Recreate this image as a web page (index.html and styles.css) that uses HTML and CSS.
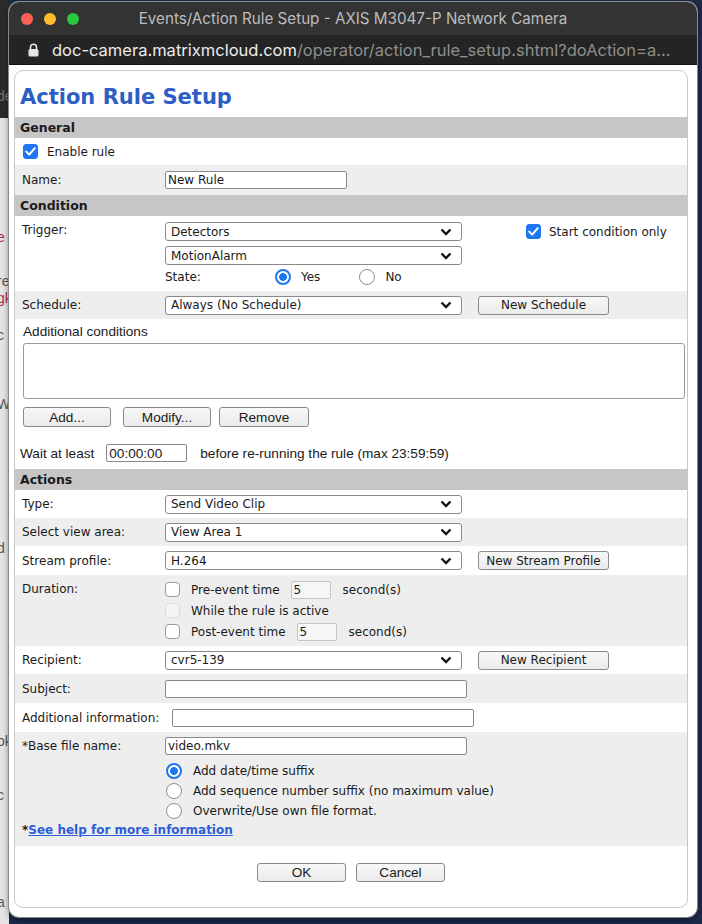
FILE: index.html
```html
<!DOCTYPE html>
<html lang="en">

<head>
    <meta charset="UTF-8">
    <title>Events/Action Rule Setup - AXIS M3047-P Network Camera</title>
    <link rel="stylesheet" href="styles.css">
</head>

<body>
    <div class="desk">
        <!-- bits of the page behind the popup -->
        <div class="behind">
            <span class="b-dark">de</span>
            <span class="b-red b1">e</span>
            <span class="b2">re</span>
            <span class="b-red">gk</span>
            <span class="b3">c</span>
            <span>i</span>
            <span class="b4">W</span>
            <span class="b5">d</span>
            <span class="b6">ok</span>
            <span class="b7">c</span>
            <span class="b8">a</span>
        </div>

        <div class="window">
            <div class="titlebar">
                <div class="lights">
                    <span class="light red"></span>
                    <span class="light yellow"></span>
                    <span class="light green"></span>
                </div>
                <div class="win-title">Events/Action Rule Setup - AXIS M3047-P Network Camera</div>
            </div>
            <div class="addressbar">
                <svg class="lock" width="11" height="14" viewBox="0 0 11 14">
                    <path d="M2.5 6V4.2a3 3 0 0 1 6 0V6" fill="none" stroke="#e6e6e6" stroke-width="1.6"/>
                    <rect x="0.5" y="6" width="10" height="7.5" rx="1.5" fill="#e6e6e6"/>
                </svg>
                <span class="url"><span class="host">doc-camera.matrixmcloud.com</span>/operator/action_rule_setup.shtml?doAction=a...</span>
            </div>

            <div class="page">
                <div class="panel">
                    <h1>Action Rule Setup</h1>

                    <!-- General -->
                    <div class="bar">General</div>
                    <div class="row enable-row">
                        <span class="check on"><svg width="11" height="9" viewBox="0 0 11 9"><path d="M1.2 4.6l3 3 5.6-6.4" fill="none" stroke="#fff" stroke-width="2" stroke-linecap="round" stroke-linejoin="round"/></svg></span>
                        <span class="lbl">Enable rule</span>
                    </div>
                    <div class="row grey name-row">
                        <span class="label">Name:</span>
                        <span class="field w182">New Rule</span>
                    </div>

                    <!-- Condition -->
                    <div class="bar">Condition</div>
                    <div class="row trigger-row">
                        <span class="label">Trigger:</span>
                        <div class="trigger-sel">
                            <div class="select">Detectors<svg class="chev" width="12" height="8" viewBox="0 0 12 8"><path d="M1.5 1.5l4.5 4.5 4.5-4.5" fill="none" stroke="#111" stroke-width="2.4"/></svg></div>
                            <div class="select">MotionAlarm<svg class="chev" width="12" height="8" viewBox="0 0 12 8"><path d="M1.5 1.5l4.5 4.5 4.5-4.5" fill="none" stroke="#111" stroke-width="2.4"/></svg></div>
                            <div class="state">
                                <span class="state-lbl">State:</span>
                                <span class="radio on"></span><span class="opt">Yes</span>
                                <span class="radio"></span><span class="opt">No</span>
                            </div>
                        </div>
                        <div class="start-only">
                            <span class="check on"><svg width="11" height="9" viewBox="0 0 11 9"><path d="M1.2 4.6l3 3 5.6-6.4" fill="none" stroke="#fff" stroke-width="2" stroke-linecap="round" stroke-linejoin="round"/></svg></span>
                            <span>Start condition only</span>
                        </div>
                    </div>
                    <div class="row grey sel-row">
                        <span class="label">Schedule:</span>
                        <div class="select">Always (No Schedule)<svg class="chev" width="12" height="8" viewBox="0 0 12 8"><path d="M1.5 1.5l4.5 4.5 4.5-4.5" fill="none" stroke="#111" stroke-width="2.4"/></svg></div>
                        <button class="btn side">New Schedule</button>
                    </div>
                    <div class="extra">
                        <div class="extra-lbl">Additional conditions</div>
                        <div class="listbox"></div>
                        <div class="extra-btns">
                            <button class="btn w88">Add...</button>
                            <button class="btn w88 gap12">Modify...</button>
                            <button class="btn w90">Remove</button>
                        </div>
                        <div class="wait">
                            <span>Wait at least</span>
                            <span class="field time">00:00:00</span>
                            <span>before re-running the rule (max 23:59:59)</span>
                        </div>
                    </div>

                    <!-- Actions -->
                    <div class="bar">Actions</div>
                    <div class="row sel-row">
                        <span class="label">Type:</span>
                        <div class="select">Send Video Clip<svg class="chev" width="12" height="8" viewBox="0 0 12 8"><path d="M1.5 1.5l4.5 4.5 4.5-4.5" fill="none" stroke="#111" stroke-width="2.4"/></svg></div>
                    </div>
                    <div class="row grey sel-row">
                        <span class="label">Select view area:</span>
                        <div class="select">View Area 1<svg class="chev" width="12" height="8" viewBox="0 0 12 8"><path d="M1.5 1.5l4.5 4.5 4.5-4.5" fill="none" stroke="#111" stroke-width="2.4"/></svg></div>
                    </div>
                    <div class="row sel-row stream-row">
                        <span class="label">Stream profile:</span>
                        <div class="select">H.264<svg class="chev" width="12" height="8" viewBox="0 0 12 8"><path d="M1.5 1.5l4.5 4.5 4.5-4.5" fill="none" stroke="#111" stroke-width="2.4"/></svg></div>
                        <button class="btn side">New Stream Profile</button>
                    </div>
                    <div class="row grey duration-row">
                        <span class="label">Duration:</span>
                        <div class="dur">
                            <div class="dur-line">
                                <span class="check"></span>
                                <span class="dur-txt">Pre-event time</span>
                                <span class="field sec">5</span>
                                <span>second(s)</span>
                            </div>
                            <div class="dur-line">
                                <span class="check off"></span>
                                <span class="dur-txt">While the rule is active</span>
                            </div>
                            <div class="dur-line">
                                <span class="check"></span>
                                <span class="dur-txt">Post-event time</span>
                                <span class="field sec">5</span>
                                <span>second(s)</span>
                            </div>
                        </div>
                    </div>
                    <div class="row sel-row">
                        <span class="label">Recipient:</span>
                        <div class="select">cvr5-139<svg class="chev" width="12" height="8" viewBox="0 0 12 8"><path d="M1.5 1.5l4.5 4.5 4.5-4.5" fill="none" stroke="#111" stroke-width="2.4"/></svg></div>
                        <button class="btn side">New Recipient</button>
                    </div>
                    <div class="row grey text-row">
                        <span class="label">Subject:</span>
                        <span class="field w302"></span>
                    </div>
                    <div class="row text-row">
                        <span class="label wide">Additional information:</span>
                        <span class="field w302"></span>
                    </div>
                    <div class="row grey base-row">
                        <div class="base-top">
                            <span class="label">*Base file name:</span>
                            <span class="field w302">video.mkv</span>
                        </div>
                        <div class="suffix">
                            <div class="suffix-line"><span class="radio on"></span><span>Add date/time suffix</span></div>
                            <div class="suffix-line"><span class="radio"></span><span>Add sequence number suffix (no maximum value)</span></div>
                            <div class="suffix-line"><span class="radio"></span><span>Overwrite/Use own file format.</span></div>
                        </div>
                        <div class="help">*<a href="#">See help for more information</a></div>
                    </div>

                    <div class="footer">
                        <button class="btn w89">OK</button>
                        <button class="btn w89">Cancel</button>
                    </div>
                </div>
            </div>
        </div>
    </div>
</body>

</html>
```

FILE: styles.css
```css
/* Desktop behind the popup window */
body {
    margin: 0;
    background: #1c2b4a;
    font-family: 'DejaVu Sans', Verdana, sans-serif;
    color: #1a1a1a;
}

.desk {
    width: 702px;
    height: 924px;
    display: flex;
    overflow: hidden;
    background: linear-gradient(90deg, #e4e4e4 0, #e4e4e4 9px, #1c2b4a 9px);
}

.behind {
    width: 9px;
    flex-shrink: 0;
    display: flex;
    flex-direction: column;
    font-family: 'Liberation Sans', Arial, sans-serif;
    font-size: 14px;
    color: #555;
    line-height: 17px;
    text-indent: -3px;
    overflow: hidden;
    background: linear-gradient(180deg, #2a2a2a 0, #2a2a2a 118px, transparent 118px);
}

.behind .b-dark { margin-top: 88px; color: #777; }
.behind .b-red { color: #b3264a; }
.behind .b1 { margin-top: 124px; }
.behind .b2 { margin-top: 27px; }
.behind .b3 { margin-top: 20px; }
.behind .b4 { margin-top: 35px; }
.behind .b5 { margin-top: 127px; }
.behind .b6 { margin-top: 176px; }
.behind .b7 { margin-top: 37px; }
.behind .b8 { margin-top: 90px; }

/* Popup window */
.window {
    width: 688px;
    height: 915px;
    margin-top: 2px;
    flex-shrink: 0;
    background: #fff;
    border-radius: 10px;
    overflow: hidden;
    box-shadow: 0 0 0 1px #8a8a8a, 0 3px 6px rgba(0, 0, 0, 0.5);
    display: flex;
    flex-direction: column;
}

.titlebar {
    height: 33px;
    background: #333333;
    display: flex;
    align-items: center;
}

.lights {
    display: flex;
    gap: 11px;
    padding-left: 12px;
}

.light {
    width: 12px;
    height: 12px;
    border-radius: 50%;
}

.red { background: #fe5f57; }
.yellow { background: #febc2e; }
.green { background: #28c840; }

.win-title {
    flex: 1;
    text-align: center;
    font-family: 'Inter', 'Roboto', sans-serif;
    font-size: 15.2px;
    color: #bdbdbd;
    padding-right: 70px;
}

.addressbar {
    height: 29px;
    background: #242424;
    display: flex;
    align-items: center;
    gap: 13px;
    padding-left: 19px;
    border-bottom: 1px solid #111;
}

.url {
    font-family: 'Inter', 'Roboto', sans-serif;
    font-size: 16.5px;
    color: #8e8e8e;
    white-space: nowrap;
}

.host {
    color: #ececec;
}

/* Page inside the popup */
.page {
    flex: 1;
    padding: 5px 9px 9px 5px;
    display: flex;
}

.panel {
    flex: 1;
    border: 1px solid #c8c8c8;
    border-radius: 9px;
    display: flex;
    flex-direction: column;
    font-size: 12px;
}

h1 {
    margin: 0;
    height: 46px;
    padding: 14px 0 0 5px;
    box-sizing: border-box;
    font-size: 21px;
    color: #2d5ec4;
    font-weight: bold;
}

.bar {
    background: #c6c6c6;
    font-weight: bold;
    font-size: 12.5px;
    padding: 3px 5px 0;
    height: 21px;
    box-sizing: border-box;
}

.row {
    display: flex;
    align-items: center;
    padding: 0 7px;
    box-sizing: border-box;
}

.grey {
    background: #eeeeee;
}

.label {
    width: 143px;
    flex-shrink: 0;
}

.label.wide {
    width: 150px;
}

.enable-row {
    height: 27px;
    padding-left: 8px;
    gap: 9px;
}

.name-row {
    height: 30px;
}

/* Form controls */
.field {
    height: 18px;
    box-sizing: border-box;
    border: 1px solid #8a8a8a;
    border-radius: 2px;
    background: #fff;
    padding: 1px 2px 0;
    font-size: 12px;
    line-height: 15px;
}

.w182 { width: 182px; }
.w302 { width: 302px; }

.select {
    width: 297px;
    height: 19px;
    box-sizing: border-box;
    border: 1px solid #8a8a8a;
    border-radius: 3px;
    background: #fff;
    padding: 0 9px 0 5px;
    display: flex;
    align-items: center;
    justify-content: space-between;
    font-size: 12px;
}

.check {
    width: 15px;
    height: 15px;
    box-sizing: border-box;
    border: 1px solid #9a9a9a;
    border-radius: 4px;
    background: #fff;
    display: inline-flex;
    align-items: center;
    justify-content: center;
    flex-shrink: 0;
}

.check.on {
    background: #1d76f2;
    border-color: #1d76f2;
    border-radius: 3px;
}

.check.off {
    border-color: #dcdcdc;
    background: #f4f4f4;
}

.radio {
    width: 16px;
    height: 16px;
    box-sizing: border-box;
    border: 1px solid #8e8e8e;
    border-radius: 50%;
    background: #fff;
    flex-shrink: 0;
}

.radio.on {
    border: 2px solid #1d76f2;
    background: radial-gradient(circle, #1d76f2 0, #1d76f2 3.6px, #fff 4.2px);
}

.btn {
    height: 19px;
    box-sizing: border-box;
    border: 1px solid #8a8a8a;
    border-radius: 3px;
    background: linear-gradient(#f7f7f7, #ebebeb);
    font-family: 'DejaVu Sans', Verdana, sans-serif;
    font-size: 12px;
    color: #1a1a1a;
    padding: 0;
}

.btn.side {
    width: 131px;
    margin-left: 16px;
}

/* Condition */
.trigger-row {
    align-items: flex-start;
    height: 75px;
    padding-top: 6px;
}

.trigger-row .label {
    padding-top: 1px;
}

.trigger-sel {
    display: flex;
    flex-direction: column;
    gap: 5px;
}

.state {
    display: flex;
    align-items: center;
    height: 20px;
    margin-top: -3px;
}

.state-lbl {
    width: 110px;
}

.state .opt {
    margin-left: 10px;
    margin-right: 39px;
}

.start-only {
    display: flex;
    align-items: center;
    gap: 8px;
    margin-left: 64px;
    margin-top: 2px;
}

.sel-row {
    height: 28px;
}

.stream-row {
    height: 29px;
}

.extra {
    padding: 5px 0 0 8px;
    height: 150px;
    box-sizing: border-box;
    font-family: 'Liberation Sans', Arial, sans-serif;
    font-size: 13.6px;
}

.extra-lbl {
    height: 19px;
}

.listbox {
    width: 662px;
    height: 56px;
    box-sizing: border-box;
    border: 1px solid #9a9a9a;
    border-radius: 3px;
}

.extra-btns {
    display: flex;
    gap: 8px;
    margin-top: 8px;
}

.extra .btn {
    height: 20px;
    font-family: 'Liberation Sans', Arial, sans-serif;
    font-size: 13.6px;
}

.w88 { width: 88px; }
.w90 { width: 90px; }
.w89 { width: 89px; }

.extra-btns .gap12 {
    margin-left: 4px;
}

.wait {
    display: flex;
    align-items: center;
    margin-top: 17px;
    margin-left: -3px;
}

.wait .time {
    width: 81px;
    font-family: 'Liberation Sans', Arial, sans-serif;
    font-size: 13.6px;
    margin: 0 13px 0 12px;
}

/* Actions */
.duration-row {
    height: 71px;
    align-items: flex-start;
    padding-top: 4px;
}

.duration-row .label {
    padding-top: 3px;
}

.dur {
    display: flex;
    flex-direction: column;
}

.dur-line {
    height: 21px;
    display: flex;
    align-items: center;
}

.dur-txt {
    margin: 0 11px;
}

.field.sec {
    width: 40px;
    margin-right: 12px;
    border-color: #c4c4c4;
    background: #f6f6f6;
}

.text-row {
    height: 29px;
}

.base-row {
    height: 114px;
    flex-direction: column;
    align-items: stretch;
    padding-top: 5px;
}

.base-top {
    display: flex;
    align-items: center;
}

.suffix {
    margin: 6px 0 0 144px;
    display: flex;
    flex-direction: column;
}

.suffix-line {
    height: 20px;
    display: flex;
    align-items: center;
    gap: 11px;
}

.help {
    margin-top: 2px;
    font-weight: bold;
}

.help a {
    color: #2c5ed8;
}

.footer {
    flex: 1;
    display: flex;
    justify-content: center;
    gap: 10px;
    padding-top: 17px;
}

.footer .btn {
    height: 19px;
    font-family: 'Liberation Sans', Arial, sans-serif;
    font-size: 13.6px;
}
```
